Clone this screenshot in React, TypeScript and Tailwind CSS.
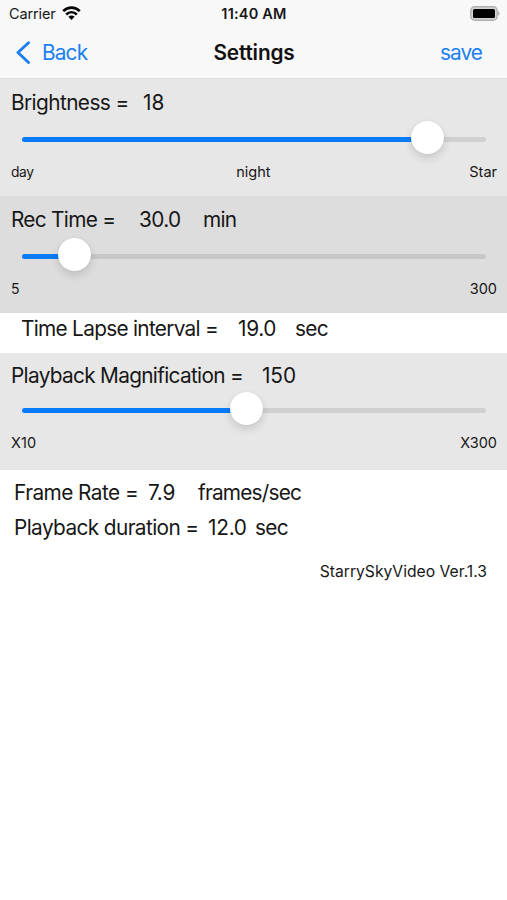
import type { ReactNode } from "react";

function Slider({ fill, gap, track }: { fill: number; gap: string; track: string }) {
  return (
    <div className={`${gap} relative ml-[22px] mr-[21px] flex h-[36px] items-center`}>
      <div className={`h-[5px] w-full overflow-hidden rounded-full ${track}`}>
        <div className="h-full bg-[#087cf8]" style={{ width: fill }} />
      </div>
      <div
        className="absolute top-0 size-[33px] rounded-full bg-white shadow-[0_4px_9px_rgba(0,0,0,0.14),0_0_1px_rgba(0,0,0,0.1)]"
        style={{ left: fill - 16 }}
      />
    </div>
  );
}

function Line({ className, children }: { className: string; children: ReactNode }) {
  return <div className={`flex h-6 items-center whitespace-pre leading-6 ${className}`}>{children}</div>;
}

function Ends({ className, children }: { className: string; children: ReactNode }) {
  return (
    <div className={`flex h-5 items-center justify-between pl-[11px] pr-[10px] text-[14.5px] leading-5 ${className}`}>
      {children}
    </div>
  );
}

export default function App() {
  return (
    <main className="h-[900px] w-[507px] overflow-hidden bg-white font-['Inter',sans-serif] text-[20.8px] text-[#171717]">
      <header className="h-[79px] border-b border-[#dedede] bg-[#f8f8f8]">
        <div className="grid h-[27px] grid-cols-3 items-center text-[14.5px] leading-5">
          <div className="flex items-center gap-[6px] pl-[9px]">
            <span className="tracking-[-0.01em]">Carrier</span>
            <svg className="-mt-[2px]" width="19" height="14" viewBox="0 0 19 14" fill="none" stroke="#050505" strokeWidth="2.7">
              <path d="M1.2 5.1C6 .4 13 .4 17.8 5.1" />
              <path d="M4.2 8.4C7.3 5.5 11.7 5.5 14.8 8.4" />
              <path d="M6.4 10.8C8.3 9.2 10.7 9.2 12.6 10.8L9.5 14Z" fill="#050505" stroke="none" />
            </svg>
          </div>
          <span className="pl-px text-center font-semibold tracking-[0.015em]">11:40 AM</span>
          <svg className="ml-auto mr-[6px]" width="31" height="15" viewBox="0 0 31 15">
            <rect x=".8" y=".8" width="26.4" height="13.4" rx="4" fill="#d4d4d4" stroke="#b0b0b0" strokeWidth="1.4" />
            <rect x="3" y="3" width="22" height="9" rx="1.5" fill="#000" />
            <path d="M28.3 5Q31 7.5 28.3 10Z" fill="#a8a8a8" />
          </svg>
        </div>
        <nav className="grid h-[51px] grid-cols-3 items-center text-[#1a7ff0]">
          <div className="flex items-center pl-[15px]">
            <svg width="16" height="24" viewBox="0 0 16 24" fill="none" stroke="#1a7ff0" strokeWidth="2.9" strokeLinecap="round" strokeLinejoin="round">
              <path d="M13.5 1.8L3 11.5L13.5 21.5" />
            </svg>
            <span className="ml-[11px] tracking-[-0.04em]">Back</span>
          </div>
          <h1 className="pl-px text-center font-semibold tracking-[-0.008em] text-[#111]">Settings</h1>
          <span className="pr-[25px] text-right tracking-[-0.045em]">save</span>
        </nav>
      </header>

      <section className="h-[117px] bg-[#e7e7e7] pt-[12px]">
        <Line className="pl-[11px]">
          <span className="w-[132px] tracking-[-0.028em]">Brightness =</span>
          <span>18</span>
        </Line>
        <Slider fill={404.5} gap="mt-[6px]" track="bg-[#d0d0d0]" />
        <Ends className="mt-[5px]">
          <span className="text-[13.8px] tracking-[-0.03em]">day</span>
          <span className="pl-[4px]">night</span>
          <span>Star</span>
        </Ends>
      </section>

      <section className="h-[117px] bg-[#dddddd] pt-[12px]">
        <Line className="pl-[11px]">
          <span className="w-[128px] tracking-[-0.034em]">Rec Time =</span>
          <span className="w-[64px] tracking-[-0.03em]">30.0</span>
          <span className="tracking-[-0.035em]">min</span>
        </Line>
        <Slider fill={51.5} gap="mt-[6px]" track="bg-[#c7c7c7]" />
        <Ends className="mt-[5px]">
          <span className="text-[14px]">5</span>
          <span>300</span>
        </Ends>
      </section>

      <section className="h-[40px] pt-[4px]">
        <Line className="pl-[21px]">
          <span className="w-[217px] tracking-[-0.034em]">Time Lapse interval =</span>
          <span className="w-[57px] tracking-[-0.015em]">19.0</span>
          <span className="tracking-[-0.035em]">sec</span>
        </Line>
      </section>

      <section className="h-[117px] bg-[#e7e7e7] pt-[11px]">
        <Line className="pl-[11px]">
          <span className="w-[251px] tracking-[-0.033em]">Playback Magnification =</span>
          <span className="tracking-[-0.005em]">150</span>
        </Line>
        <Slider fill={223.5} gap="mt-[4px]" track="bg-[#d0d0d0]" />
        <Ends className="mt-[5px]">
          <span className="tracking-[0.01em]">X10</span>
          <span>X300</span>
        </Ends>
      </section>

      <section className="pt-[11px]">
        <Line className="pl-[14px]">
          <span className="w-[134px] tracking-[-0.026em]">Frame Rate =</span>
          <span className="w-[50px] tracking-[-0.015em]">7.9</span>
          <span className="tracking-[-0.038em]">frames/sec</span>
        </Line>
        <Line className="mt-[11px] pl-[14px]">
          <span className="w-[194px] tracking-[-0.029em]">Playback duration =</span>
          <span className="w-[47px] tracking-[-0.012em]">12.0</span>
          <span className="tracking-[-0.035em]">sec</span>
        </Line>
        <p className="mt-[22px] pr-[20px] text-right text-[15.7px] leading-5">StarrySkyVideo Ver.1.3</p>
      </section>
    </main>
  );
}
